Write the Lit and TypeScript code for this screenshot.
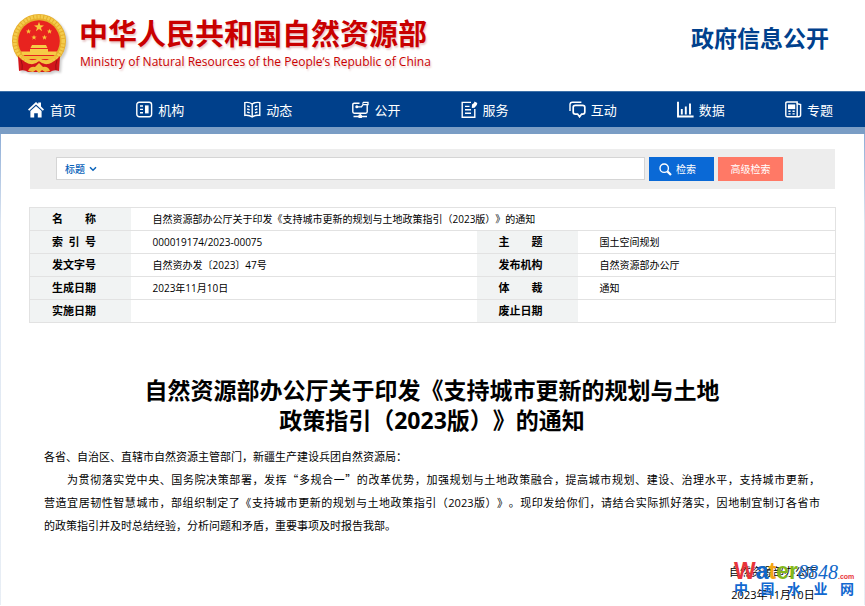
import { LitElement, html, css, svg } from "lit";
import { customElement } from "lit/decorators.js";

const star = (x: number, y: number, r: number) => {
  const pts: string[] = [];
  for (let i = 0; i < 10; i++) {
    const a = (-90 + i * 36) * (Math.PI / 180);
    const q = i % 2 ? r * 0.4 : r;
    pts.push(`${(x + q * Math.cos(a)).toFixed(2)},${(y + q * Math.sin(a)).toFixed(2)}`);
  }
  return svg`<polygon points=${pts.join(" ")} fill="#f8c83c"/>`;
};

const emblem = html`<svg class="emblem" viewBox="0 0 56 60" aria-hidden="true">
  <ellipse cx="28" cy="27" rx="27" ry="27" fill="#e6ae2c"/>
  <ellipse cx="28" cy="27" rx="24.200" ry="24.400" fill="none" stroke="#f4cc4c" stroke-width="3.600" stroke-dasharray="2.400 1"/>
  <circle cx="28" cy="27" r="20.800" fill="#e8231f"/>
  ${star(28, 13, 5.2)}${star(17.5, 17.5, 2.8)}${star(38.500, 17.5, 2.8)}${star(23, 23.5, 2.8)}${star(33.500, 23.5, 2.8)}
  <path d="M21 31h14l1.500 3h-17z M19 35h18v2.500h9l-1.500 3.500h-33L10 37.500h9z" fill="#f6cb46"/>
  <path d="M9 42h38l-3 3H12z" fill="#f2bd3a"/>
  <path d="M7 42 Q13 49 21 50 Q28 45 35 50 Q43 49 49 42 L48 57 Q43 55 39 58 H17 Q13 55 8 57Z" fill="#d3151b"/>
  <path d="M12 43Q20 49 28 44Q36 49 44 43L40 49Q33 52 28 47Q23 52 16 49Z" fill="#f3c440"/>
  <path d="M17 57q2-5 7-4l4-4 4 4q5-1 7 4l-5 1-3-2-3 3-3-3-3 2z" fill="#efbe3b"/>
  <path d="M10 46q2 5 1 10 M46 46q-2 5-1 10" stroke="#9e0d12" fill="none"/>
</svg>`;

const icons = {
  home: svg`<path d="M0 8.5 8 1l2.2 2V1.4H13v4.2L16 8.5l-1.2 1.3L8 3.6 1.2 9.8z" fill="#fff"/><path d="M2.4 10 8 5l5.6 5v6.4H9.8v-4.2H6.2v4.2H2.4z" fill="#fff"/>`,
  org: svg`<rect x=".8" y="1.3" width="14.8" height="14.4" rx="2.4"/><path d="M4 5h3M4 8.4h3M4 11.8h3"/><path d="M9 4.4h3.6v8H9z" fill="#fff" stroke="none"/>`,
  news: svg`<path d="M8.2 3Q5 .8.8 1.6v12.8q4.4-.6 7.4 1.6 3-2.2 7.6-1.6V1.6Q11.400.8 8.200 3z" /><path d="M8.200 3v13M3.200 5l2.500.8M3.200 8l2.500.8M3.200 11l2.500.8M13.400 5l-2.500.8M13.400 8l-2.500.8M13.400 11l-2.500.8"/>`,
  open: svg`<path d="M7.500 2.200H2.200Q.8 2.200.8 3.600v7.200q0 1.400 1.400 1.400h11.600q1.400 0 1.400-1.400V3.500"/><path d="M5.600 5.800H9.500L11 3.600H16V1.400H11.500L10.500 2.600" stroke-width="1.300"/><path d="M8.200 12.200v3.600M1.500 15.500H15"/><circle cx="4.800" cy="5.800" r=".8"/><path d="M7.200 14.400h2v2.200h-2z" fill="#fff"/>`,
  service: svg`<path d="M10 1.400H1.200v14.900h12.600V8"/><path d="M4 5.400h4.500M4 8.800h6M4 12.200h6"/><path d="M11 3.600 13 2l.5-1.600 2.800 1.500-.5 2-2.300 2.800-2.700.4z" fill="#fff" stroke="none"/>`,
  chat: svg`<path d="M1 10V3.600Q1 1.200 3.400 1.200h9"/><path d="M6.400 4.300h7.200q2.200 0 2.200 2v4.600q0 2.200-2.200 2.200h-1l-2 2.700-2-2.700H6.400q-2.200 0-2.200-2.200V6.300q0-2 2.200-2z" stroke-width="1.700"/>`,
  data: svg`<path d="M1 .8v14.700h15.600M4.800 8v5.500M8.800 5.500v8M13 2.600v11" stroke-width="1.900"/>`,
  topic: svg`<path d="M12.200 1H2Q.8 1 .8 2.200v12q0 1.600 1.600 1.600h11.200q2 0 2-2V3.600l-3.400-.8z"/><path d="M12.200 2v13M3.400 10.200h2.200M7.500 10.200h2.200M3.400 12.900h2.200M7.500 12.900h2.200"/><path d="M3 3.400h7.200v4.700H3z" fill="#fff" stroke="none"/>`,
};

const nav = [
  { label: "首页", icon: icons.home, solid: true },
  { label: "机构", icon: icons.org },
  { label: "动态", icon: icons.news },
  { label: "公开", icon: icons.open },
  { label: "服务", icon: icons.service },
  { label: "互动", icon: icons.chat },
  { label: "数据", icon: icons.data },
  { label: "专题", icon: icons.topic },
];

const rows = [
  ["索 引 号", "000019174/2023-00075", "主 题", "国土空间规划"],
  ["发文字号", "自然资办发〔2023〕47号", "发布机构", "自然资源部办公厅"],
  ["生成日期", "2023年11月10日", "体 裁", "通知"],
  ["实施日期", "", "废止日期", ""],
];

@customElement("app-root")
export class AppRoot extends LitElement {
  static styles = css`
    :host {
      display: block;
      background: #fff;
      color: #000;
      font-family: "Open Sans", "Noto Sans CJK SC", sans-serif;
      font-size: 11px;
      text-spacing-trim: space-all;
    }
    * { box-sizing: border-box; }
    h1, h2, p { margin: 0; }
    a { color: inherit; text-decoration: none; }
    .header {
      display: flex;
      align-items: center;
      justify-content: space-between;
      height: 91px;
      padding: 0 36px 4px 11px;
    }
    .brand { display: flex; align-items: center; gap: 12px; }
    .emblem {
      width: 56px;
      height: 60px;
      filter: drop-shadow(2px 2px 1px #ccc);
    }
    .names { color: #c90000; text-shadow: 1px 2px 2px #e8c8c8; white-space: nowrap; }
    .ministry { font-size: 29px; line-height: 36px; font-weight: 700; }
    .english { font-size: 12px; line-height: 20px; padding-left: 1px; }
    .section { color: #00408c; font-size: 23px; line-height: 32px; font-weight: 700; padding-bottom: 12px; }
    .nav {
      display: grid;
      grid-template-columns: repeat(8, 1fr);
      height: 43px;
      background: #00408b;
      border-top: 1px solid #3c70a8;
      border-bottom: 7px solid #7a9dc5;
    }
    .nav a {
      display: flex;
      align-items: center;
      gap: 5px;
      padding: 0 0 1px 28px;
      color: #fff;
      font-size: 13px;
      white-space: nowrap;
    }
    .icon { width: 17px; height: 17px; fill: none; stroke: #fff; stroke-width: 1.400; flex: none; }
    .solid { stroke: none; }
    .main {
      padding: 15px 28px 0 28px;
      border: solid;
      border-width: 0 1px;
      border-image: linear-gradient(#8cacd6, #dde6f2 90px, #e8eef5) 1;
    }
    .search {
      display: flex;
      gap: 4px;
      height: 40px;
      margin: 0 1px;
      padding: 8px 52px 8px 26px;
      background: #ededed;
    }
    .field {
      flex: 1;
      display: flex;
      align-items: center;
      height: 23px;
      padding: 0 8px;
      background: #fff;
      border: 1px solid #d5d5d5;
    }
    .pick { display: flex; align-items: center; position: relative; }
    .pick select {
      appearance: none;
      width: 34px;
      padding: 0;
      border: 0;
      background: none;
      color: #0a63ba;
      font: 500 10px/20px "Noto Sans CJK SC", sans-serif;
    }
    .chevron { position: absolute; right: 2px; width: 8px; height: 6px; pointer-events: none; }
    .field input { flex: 1; min-width: 0; border: 0; outline: 0; background: none; font: inherit; }
    .button {
      display: flex;
      align-items: center;
      justify-content: center;
      gap: 4px;
      width: 65px;
      height: 24px;
      padding: 0;
      border: 0;
      background: #0a69d6;
      color: #fff;
      font: 10px/20px "Noto Sans CJK SC", sans-serif;
    }
    .find { padding-right: 8px; }
    .advanced { background: #ff7966; }
    .lens { width: 13px; height: 13px; }
    .info {
      width: 100%;
      margin-top: 18px;
      border: 1px solid #e2e2e2;
      border-collapse: collapse;
      table-layout: fixed;
      font-size: 10px;
    }
    .label-col { width: 101px; }
    .side-col { width: 258px; }
    .info th, .info td { height: 23px; padding: 0 0 0 22px; line-height: 20px; text-align: left; border: solid #e2e2e2; border-width: 1px 0; }
    .info th { background: #f1f3f3; font-size: 11px; }
    .key { display: block; width: 44px; text-align-last: justify; white-space: nowrap; }
    .article { padding: 52px 16px 0 15px; }
    .title { text-align: center; font-size: 23px; line-height: 30px; font-weight: 700; }
    .text { margin-top: 10px; line-height: 23px; }
    .full { display: block; text-align: justify; text-align-last: justify; }
    .indent { padding-left: 23px; }
    .quote { font-family: "Noto Sans CJK SC", sans-serif; }
    .signature {
      position: relative;
      width: 130px;
      margin: 25px -38px 0 auto;
      padding-right: 40px;
      display: grid;
      gap: 3px;
      text-align: center;
      white-space: nowrap;
      line-height: 20px;
    }
    .mark { position: absolute; left: 6px; top: 0; width: 120px; font-weight: 700; }
    .logo { display: flex; align-items: baseline; height: 18px; font: 700 23px/18px "Liberation Sans", sans-serif; }
    .red { color: #e8343b; }
    .blue { color: #1168c9; }
    .orange { color: #f3a614; }
    .green { color: #84b81c; }
    .digits { color: #1168c9; font: italic 400 20px/18px "Liberation Serif", serif; }
    .com { color: #e8343b; font-size: 7px; }
    .cn { display: flex; justify-content: space-between; color: #1168d0; font-size: 14px; line-height: 18px; }
  `;

  render() {
    return html`
      <header class="header">
        <div class="brand">
          ${emblem}
          <div class="names">
            <div class="ministry">中华人民共和国自然资源部</div>
            <div class="english">Ministry of Natural Resources of the People‘s Republic of China</div>
          </div>
        </div>
        <div class="section">政府信息公开</div>
      </header>
      <nav class="nav">
        ${nav.map(
          (n) => html`<a href="#"><svg class="icon ${n.solid ? "solid" : ""}" viewBox="0 0 17 17" aria-hidden="true">${n.icon}</svg>${n.label}</a>`
        )}
      </nav>
      <main class="main">
        <form class="search">
          <div class="field">
            <label class="pick">
              <select aria-label="检索范围"><option>标题</option></select>
              <svg class="chevron" viewBox="0 0 8 6" aria-hidden="true"><path d="M1 1.200 4 4.200 7 1.200" fill="none" stroke="#0a63ba" stroke-width="1.500"/></svg>
            </label>
            <input type="text" aria-label="检索词" />
          </div>
          <button class="button find" type="button">
            <svg class="lens" viewBox="0 0 13 13" aria-hidden="true"><circle cx="5.200" cy="5.200" r="4.200" fill="none" stroke="#fff" stroke-width="1.400"/><path d="M8.400 8.400 12 12" stroke="#fff" stroke-width="2.200"/></svg>检索
          </button>
          <button class="button advanced" type="button">高级检索</button>
        </form>
        <table class="info">
          <colgroup><col class="label-col" /><col /><col class="label-col" /><col class="side-col" /></colgroup>
          <tbody>
            <tr>
              <th scope="row"><span class="key">名 称</span></th>
              <td colspan="3">自然资源部办公厅关于印发《支持城市更新的规划与土地政策指引（2023版）》的通知</td>
            </tr>
            ${rows.map(
              (r) => html`<tr>
                <th scope="row"><span class="key">${r[0]}</span></th><td>${r[1]}</td>
                <th scope="row"><span class="key">${r[2]}</span></th><td>${r[3]}</td>
              </tr>`
            )}
          </tbody>
        </table>
        <article class="article">
          <h1 class="title">自然资源部办公厅关于印发《支持城市更新的规划与土地<br />政策指引（2023版）》的通知</h1>
          <div class="text">
            <p>各省、自治区、直辖市自然资源主管部门，新疆生产建设兵团自然资源局：</p>
            <p>
              <span class="full indent">为贯彻落实党中央、国务院决策部署，发挥<span class="quote">“</span>多规合一<span class="quote">”</span>的改革优势，加强规划与土地政策融合，提高城市规划、建设、治理水平，支持城市更新，</span>
              <span class="full">营造宜居韧性智慧城市，部组织制定了《支持城市更新的规划与土地政策指引（2023版）》。现印发给你们，请结合实际抓好落实，因地制宜制订各省市</span>
              <span>的政策指引并及时总结经验，分析问题和矛盾，重要事项及时报告我部。</span>
            </p>
          </div>
          <div class="signature">
            <p>自然资源部办公厅</p>
            <p>2023年11月10日</p>
            <div class="mark">
              <div class="logo"><span class="red">W</span><span class="blue">a</span><span class="orange">t</span><span class="green">er</span><span class="digits">8848</span><span class="com">.com</span></div>
              <div class="cn"><span>中</span><span>国</span><span>水</span><span>业</span><span>网</span></div>
            </div>
          </div>
        </article>
      </main>
    `;
  }
}
